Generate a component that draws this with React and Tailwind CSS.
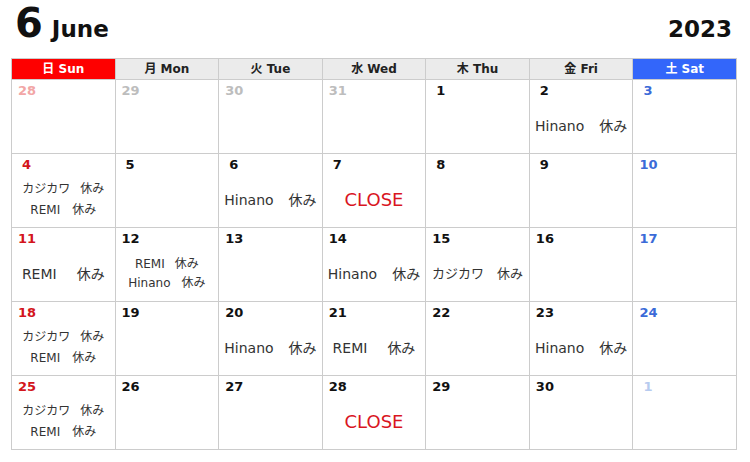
const FONT = { fontFamily: '"DejaVu Sans", "Noto Sans CJK JP", sans-serif' };

const HEADS = [
  { label: "日 Sun", cls: "bg-[#fe0000] text-white" },
  { label: "月 Mon", cls: "bg-[#ebebeb] text-[#222]" },
  { label: "火 Tue", cls: "bg-[#ebebeb] text-[#222]" },
  { label: "水 Wed", cls: "bg-[#ebebeb] text-[#222]" },
  { label: "木 Thu", cls: "bg-[#ebebeb] text-[#222]" },
  { label: "金 Fri", cls: "bg-[#ebebeb] text-[#222]" },
  { label: "土 Sat", cls: "bg-[#3366fa] text-white" },
];

// off-day entries
const HINANO = { lines: [{ name: "Hinano", gap: "ml-[15px]" }], size: "text-[14px]" };
const REMI = { lines: [{ name: "REMI", gap: "ml-[20px]" }], size: "text-[14px]" };
const KAJI_REMI = {
  lines: [
    { name: "カジカワ", gap: "ml-[10px]" },
    { name: "REMI", gap: "ml-[12px]" },
  ],
  size: "text-[12px]",
  leading: "leading-[21px]",
};
const REMI_HINANO = {
  lines: [
    { name: "REMI", gap: "ml-[10px]" },
    { name: "Hinano", gap: "ml-[11px]" },
  ],
  size: "text-[12px]",
  leading: "leading-[19px]",
};
const KAJI = { lines: [{ name: "カジカワ", gap: "ml-[13px]" }], size: "text-[13px]" };

const WEEKS = [
  [
    { d: 28, tone: "text-[#f2a6a6]" },
    { d: 29, tone: "text-[#bdbdbd]" },
    { d: 30, tone: "text-[#bdbdbd]" },
    { d: 31, tone: "text-[#bdbdbd]" },
    { d: 1 },
    { d: 2, off: HINANO },
    { d: 3, tone: "text-[#3b6bd8]" },
  ],
  [
    { d: 4, tone: "text-[#d3151c]", off: KAJI_REMI },
    { d: 5 },
    { d: 6, off: HINANO },
    { d: 7, close: true },
    { d: 8 },
    { d: 9 },
    { d: 10, tone: "text-[#3b6bd8]" },
  ],
  [
    { d: 11, tone: "text-[#d3151c]", off: REMI },
    { d: 12, off: REMI_HINANO },
    { d: 13 },
    { d: 14, off: HINANO },
    { d: 15, off: KAJI },
    { d: 16 },
    { d: 17, tone: "text-[#3b6bd8]" },
  ],
  [
    { d: 18, tone: "text-[#d3151c]", off: KAJI_REMI },
    { d: 19 },
    { d: 20, off: HINANO },
    { d: 21, off: REMI },
    { d: 22 },
    { d: 23, off: HINANO },
    { d: 24, tone: "text-[#3b6bd8]" },
  ],
  [
    { d: 25, tone: "text-[#d3151c]", off: KAJI_REMI },
    { d: 26 },
    { d: 27 },
    { d: 28, close: true },
    { d: 29 },
    { d: 30 },
    { d: 1, tone: "text-[#b7cbef]" },
  ],
];

function DayCell({ day }) {
  const pad = day.d < 10 ? "pl-[10px]" : "pl-[6px]";
  return (
    <div className="flex h-[74px] flex-col border-b border-r border-[#cccccc] bg-white">
      <div
        className={`pt-[4px] text-[13px] font-bold leading-[14px] ${pad} ${day.tone || "text-[#111]"}`}
      >
        {day.d}
      </div>
      <div className="flex flex-1 flex-col items-center justify-center">
        {day.close && (
          <span className="text-[18px] leading-none text-[#d9161f]">CLOSE</span>
        )}
        {day.off &&
          day.off.lines.map((line) => (
            <div
              key={line.name}
              className={`flex whitespace-nowrap text-[#333] ${day.off.size} ${day.off.leading || "leading-[18px]"}`}
            >
              <span>{line.name}</span>
              <span className={line.gap}>休み</span>
            </div>
          ))}
      </div>
    </div>
  );
}

export default function App() {
  return (
    <div className="h-[462px] w-[750px] bg-white" style={FONT}>
      {/* title */}
      <div className="flex h-[58px] items-baseline justify-between pl-[15px] pr-[18px] pt-[3px]">
        <div className="flex items-baseline gap-[9px] font-bold text-[#111]">
          <span className="text-[40px] leading-none">6</span>
          <span className="text-[23px] leading-none">June</span>
        </div>
        <span className="text-[23px] font-bold leading-none text-[#111]">2023</span>
      </div>

      {/* calendar */}
      <div className="mx-[11px] w-[726px]">
        <div className="grid grid-cols-7 border-l border-t border-[#cccccc]">
          {HEADS.map((h) => (
            <div
              key={h.label}
              className={`flex h-[21px] items-center justify-center border-b border-r border-[#cccccc] text-[12px] font-bold ${h.cls}`}
            >
              {h.label}
            </div>
          ))}
          {WEEKS.flat().map((day, i) => (
            <DayCell key={i} day={day} />
          ))}
        </div>
      </div>
    </div>
  );
}
